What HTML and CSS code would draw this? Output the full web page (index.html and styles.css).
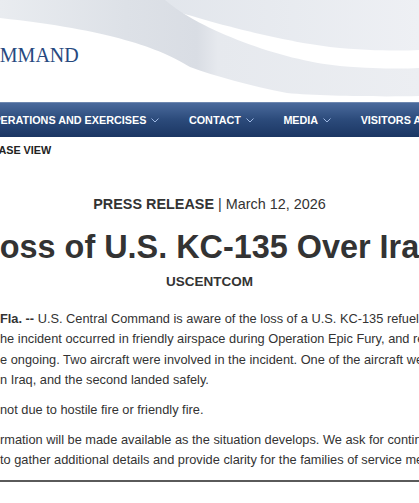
FILE: index.html
```html
<!DOCTYPE html>
<html lang="en">
<head>
<meta charset="utf-8">
<title>Loss of U.S. KC-135 Over Iraq</title>
<link rel="stylesheet" href="styles.css">
</head>
<body>
<header class="masthead">
  <svg class="swoosh" viewBox="0 0 419 102" preserveAspectRatio="none" aria-hidden="true">
    <defs>
      <linearGradient id="gUp" x1="0" y1="0" x2="1" y2="0">
        <stop offset="0" stop-color="#e1e5eb"/>
        <stop offset="1" stop-color="#eef0f4"/>
      </linearGradient>
      <linearGradient id="gLow" x1="0" y1="0" x2="1" y2="0">
        <stop offset="0" stop-color="#e9ecf0"/>
        <stop offset="0.3" stop-color="#dde1e7"/>
        <stop offset="0.47" stop-color="#d9dde4"/>
        <stop offset="0.52" stop-color="#e6e9ee"/>
        <stop offset="1" stop-color="#eceef2"/>
      </linearGradient>
    </defs>
    <path d="M143 0 C175 12 260 38 330 47 C370 51 400 51 419 50 V0 Z" fill="url(#gUp)"/>
    <path d="M0 0 H165 C200 30 280 60 340 66 C380 69 400 69 419 68 V96 C380 97 320 96 287 93 C250 86 215 76 190 67 C160 48 110 30 0 18 Z" fill="url(#gLow)"/>
  </svg>
  <div class="brand">U.S. CENTRAL COMMAND</div>
</header>

<nav class="mainnav">
  <ul class="navlist">
    <li class="navitem">OPERATIONS AND EXERCISES <svg class="chev" viewBox="0 0 8 5" aria-hidden="true"><polyline points="0.5,0.5 4,4 7.5,0.5"/></svg></li>
    <li class="navitem">CONTACT <svg class="chev" viewBox="0 0 8 5" aria-hidden="true"><polyline points="0.5,0.5 4,4 7.5,0.5"/></svg></li>
    <li class="navitem">MEDIA <svg class="chev" viewBox="0 0 8 5" aria-hidden="true"><polyline points="0.5,0.5 4,4 7.5,0.5"/></svg></li>
    <li class="navitem">VISITORS AND PUBLIC <svg class="chev" viewBox="0 0 8 5" aria-hidden="true"><polyline points="0.5,0.5 4,4 7.5,0.5"/></svg></li>
  </ul>
</nav>

<div class="crumb">PRESS RELEASE VIEW</div>

<main class="release">
  <p class="kicker"><strong>PRESS RELEASE</strong> | March 12, 2026</p>
  <h1 class="title">Loss of U.S. KC-135 Over Iraq</h1>
  <p class="byline">USCENTCOM</p>
  <div class="story">
    <p><strong>Fla. --</strong> U.S. Central Command is aware of the loss of a U.S. KC-135 refueling aircraft.<br>he incident occurred in friendly airspace during Operation Epic Fury, and rescue efforts<br>e ongoing. Two aircraft were involved in the incident. One of the aircraft went down<br>n Iraq, and the second landed safely.</p>
    <p>not due to hostile fire or friendly fire.</p>
    <p>rmation will be made available as the situation develops. We ask for continued patience<br>to gather additional details and provide clarity for the families of service members.</p>
  </div>
  <hr class="rule">
</main>
</body>
</html>
```

FILE: styles.css
```css
html, body {
  margin: 0;
  padding: 0;
  overflow: hidden;
  background: #ffffff;
}

body {
  font-family: "Liberation Sans", Arial, sans-serif;
  color: #333333;
}

.masthead {
  position: relative;
  height: 102px;
  overflow: hidden;
}

.swoosh {
  position: absolute;
  left: 0;
  top: 0;
  width: 100%;
  height: 100%;
}

.brand {
  position: relative;
  padding-top: 43px;
  margin-left: -165px;
  font-family: "Liberation Serif", "Times New Roman", serif;
  font-size: 20px;
  line-height: 24px;
  color: #27497f;
  white-space: nowrap;
}

.mainnav {
  height: 35px;
  background: linear-gradient(#4a6a9c, #2b4a7a 50%, #1b3663);
  border-top: 1px solid #6e88b0;
  box-sizing: border-box;
  overflow: hidden;
}

.navlist {
  display: flex;
  gap: 29.5px;
  margin: 0 0 0 -15px;
  padding: 0;
  list-style: none;
  white-space: nowrap;
}

.navitem {
  display: flex;
  align-items: center;
  gap: 5px;
  height: 34px;
  font-size: 10.8px;
  font-weight: bold;
  color: #ffffff;
}

.chev {
  width: 8px;
  height: 5px;
  flex: none;
}

.chev polyline {
  fill: none;
  stroke: #9fb9e4;
  stroke-width: 1;
}

.crumb {
  padding-top: 6px;
  margin-left: -70px;
  font-size: 10.8px;
  font-weight: bold;
  line-height: 14px;
  color: #222222;
  white-space: nowrap;
}

.release {
  display: flex;
  flex-direction: column;
  align-items: center;
}

.kicker {
  margin: 37px 0 0;
  font-size: 14.4px;
  line-height: 20.57px;
  white-space: nowrap;
}

.title {
  margin: 15px 0 0;
  font-size: 32.4px;
  font-weight: bold;
  line-height: 35.6px;
  white-space: nowrap;
}

.byline {
  margin: 7px 0 0;
  font-size: 13.5px;
  font-weight: bold;
  line-height: 19.3px;
  white-space: nowrap;
}

.story {
  align-self: stretch;
  margin-top: 17.4px;
  font-size: 12.8px;
  line-height: 20.4px;
  white-space: nowrap;
}

.story p {
  margin: 0 0 9.5px;
}

.rule {
  align-self: stretch;
  margin: 0;
  border: 0;
  border-top: 2px solid #5a5a5a;
  height: 0;
}
```
